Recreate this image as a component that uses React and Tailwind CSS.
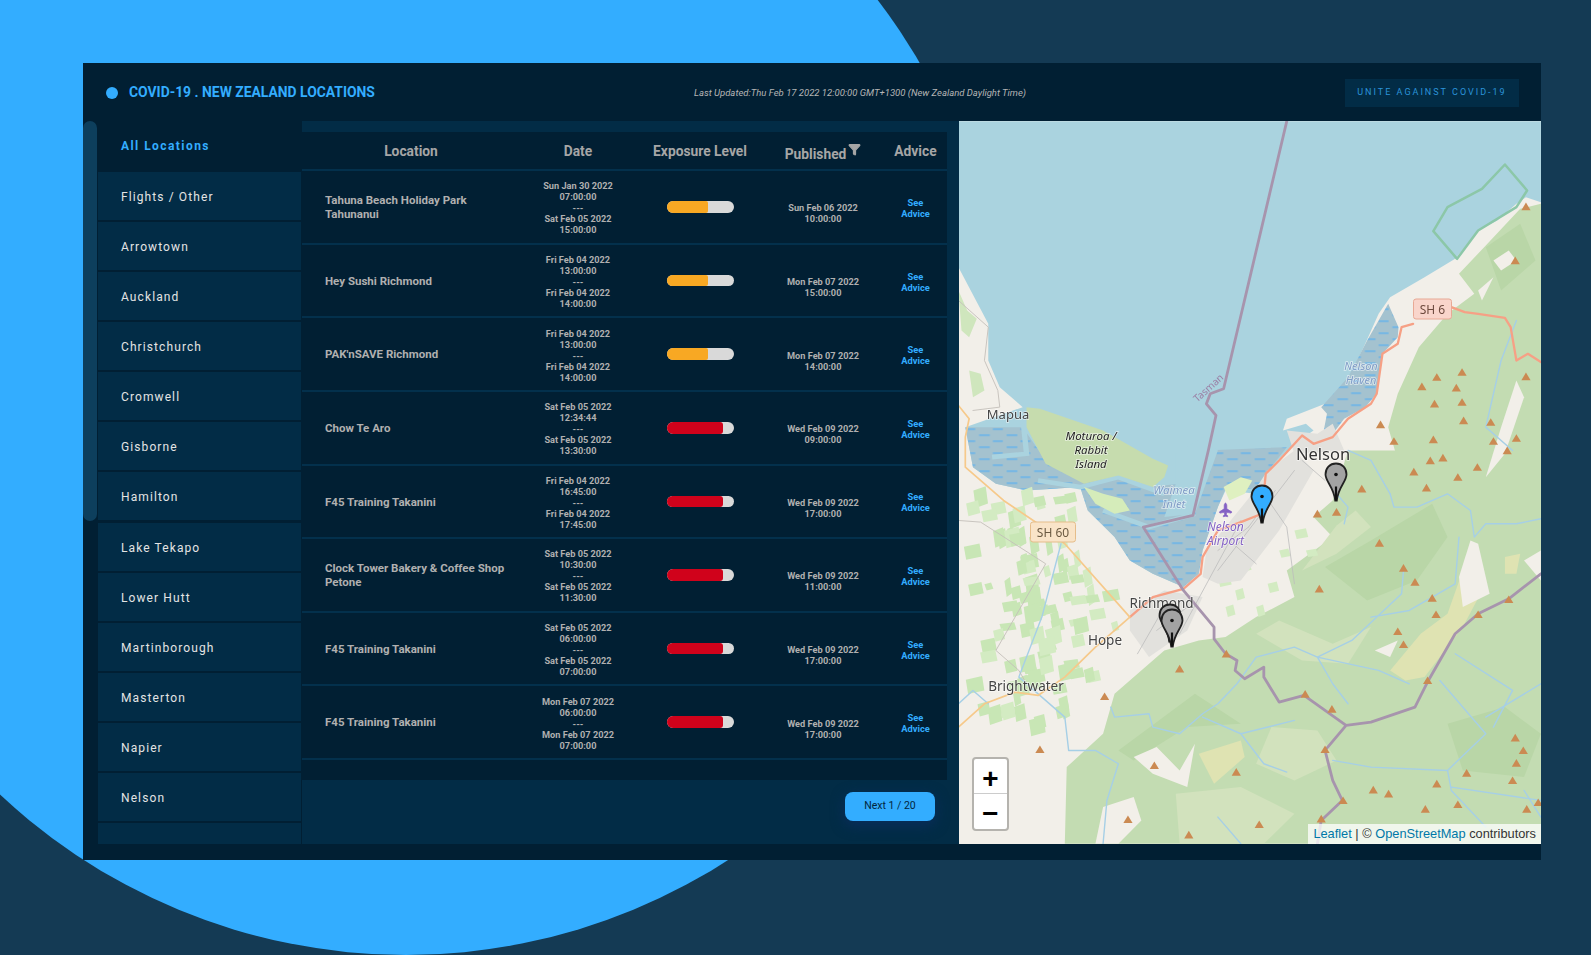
import { Filter, Plane } from 'lucide-react';

const locations = ['Flights / Other', 'Arrowtown', 'Auckland', 'Christchurch', 'Cromwell', 'Gisborne', 'Hamilton', 'Lake Tekapo', 'Lower Hutt', 'Martinborough', 'Masterton', 'Napier', 'Nelson', ''];

const rows = [
  { name: 'Tahuna Beach Holiday Park Tahunanui', from: ['Sun Jan 30 2022', '07:00:00'], to: ['Sat Feb 05 2022', '15:00:00'], level: 'orange', pub: ['Sun Feb 06 2022', '10:00:00'] },
  { name: 'Hey Sushi Richmond', from: ['Fri Feb 04 2022', '13:00:00'], to: ['Fri Feb 04 2022', '14:00:00'], level: 'orange', pub: ['Mon Feb 07 2022', '15:00:00'] },
  { name: "PAK'nSAVE Richmond", from: ['Fri Feb 04 2022', '13:00:00'], to: ['Fri Feb 04 2022', '14:00:00'], level: 'orange', pub: ['Mon Feb 07 2022', '14:00:00'] },
  { name: 'Chow Te Aro', from: ['Sat Feb 05 2022', '12:34:44'], to: ['Sat Feb 05 2022', '13:30:00'], level: 'red', pub: ['Wed Feb 09 2022', '09:00:00'] },
  { name: 'F45 Training Takanini', from: ['Fri Feb 04 2022', '16:45:00'], to: ['Fri Feb 04 2022', '17:45:00'], level: 'red', pub: ['Wed Feb 09 2022', '17:00:00'] },
  { name: 'Clock Tower Bakery & Coffee Shop Petone', from: ['Sat Feb 05 2022', '10:30:00'], to: ['Sat Feb 05 2022', '11:30:00'], level: 'red', pub: ['Wed Feb 09 2022', '11:00:00'] },
  { name: 'F45 Training Takanini', from: ['Sat Feb 05 2022', '06:00:00'], to: ['Sat Feb 05 2022', '07:00:00'], level: 'red', pub: ['Wed Feb 09 2022', '17:00:00'] },
  { name: 'F45 Training Takanini', from: ['Mon Feb 07 2022', '06:00:00'], to: ['Mon Feb 07 2022', '07:00:00'], level: 'red', pub: ['Wed Feb 09 2022', '17:00:00'] },
];

const gridCols = 'grid grid-cols-[218px_116px_128px_118px_65px]';

function ExposureBar({ level }) {
  return (
    <div className="w-[67px] h-[11.5px] rounded-full bg-[#d9d9d9] overflow-hidden">
      {level === 'orange'
        ? <div className="w-[41px] h-full rounded-r-[2px] bg-[#f8a823]" />
        : <div className="w-[56px] h-full rounded-r-[3px] bg-[#d0021b]" />}
    </div>
  );
}

function TableRow({ row }) {
  return (
    <div className={`${gridCols} h-[73.6px] items-center border-b-2 border-[#03304c]`}>
      <div className="pt-[2px] pl-[23px] pr-[10px] text-[11.5px] leading-[13.7px] font-bold text-[#b0b0b0]">{row.name}</div>
      <div className="pt-[2px] text-center text-[9.2px] leading-[11px] font-bold text-[#b0b0b0]">
        <div>{row.from[0]}</div>
        <div>{row.from[1]}</div>
        <div>---</div>
        <div>{row.to[0]}</div>
        <div>{row.to[1]}</div>
      </div>
      <div className="flex justify-center"><ExposureBar level={row.level} /></div>
      <div className="pt-[13px] text-center text-[9.2px] leading-[11px] font-bold text-[#b0b0b0]">
        <div>{row.pub[0]}</div>
        <div>{row.pub[1]}</div>
      </div>
      <div className="pt-[2px] pl-[2px] text-center text-[9.3px] leading-[11px] font-bold text-[#33adff]">
        <div>See</div>
        <div>Advice</div>
      </div>
    </div>
  );
}

// map geometry below is in crop coordinates, the group transform brings it to page space
const flatRect = (x, y, w, h) => `${x},${y} ${x + w},${y - h * 0.25} ${x + w + 6},${y + h * 0.75} ${x + 6},${y + h}`;

// scattered farmland west of the hills, stable pseudo random
const hash = (n) => {
  const v = Math.sin(n * 12.9898) * 43758.5453;
  return v - Math.floor(v);
};
const farms = [];
for (let i = 0; i < 150; i++) {
  const y = 120 + hash(i + 1) * 700;
  const limit = Math.min(300 + (y - 130) * 0.35, y > 620 ? 400 - (y - 620) * 0.7 : 480);
  const x = 28 + hash(i + 200) * 450;
  if (x > limit) continue;
  farms.push([x, y, 14 + hash(i + 400) * 30, 18 + hash(i + 600) * 36]);
}
const eastFarms = [[760, 340, 22, 24], [700, 380, 30, 30], [745, 420, 20, 30], [830, 400, 24, 28], [800, 470, 18, 30], [860, 300, 24, 22], [720, 470, 20, 30], [900, 240, 30, 26], [930, 300, 26, 20]];

const peaks = [
  [1255, 30], [1288, 22], [1378, 50], [1212, 64], [1327, 80], [1245, 112], [1076, 115], [1010, 185], [960, 190], [1122, 278],
  [1185, 353], [1215, 395], [965, 415], [1260, 443], [1270, 492], [1170, 543], [1185, 582], [1460, 447], [1380, 492], [722, 610],
  [600, 655], [1248, 690], [928, 731], [404, 738], [998, 776], [980, 897], [235, 897], [534, 945], [748, 965], [1477, 862],
  [1498, 900], [1480, 938], [1350, 968], [1470, 990], [1272, 1000], [1106, 1018], [1146, 1030], [1027, 1050], [1242, 1076], [1327, 1062],
  [1507, 1076], [1537, 1056], [465, 1107], [970, 1105], [808, 1122], [624, 1153],
  // northern ones, from the upper crop
  [1505, -732], [1477, -570], [1272, -220], [1338, -235], [1233, -192], [1323, -188], [1266, -140], [1338, -145], [1125, -78], [1342, -90],
  [1413, -85], [1160, -28], [1263, -33], [1420, -28], [1480, -37], [1456, 0], [1505, -222],
];

function Marker({ x, tip, fill }) {
  return (
    <g transform={`translate(${x - 12} ${tip - 38})`}>
      <path d="M12 1C5.7 1 1.500 5.600 1.500 12c0 7 8.300 12.500 9.700 26h1.600c1.400-13.500 9.700-19 9.700-26C22.500 5.600 18.300 1 12 1Z" fill={fill} stroke="#222" strokeWidth="1.800" />
      <path d="M12 24v14" stroke="#111" strokeWidth="2.200" />
      <circle cx="12" cy="12" r="1.800" fill="#111" />
    </g>
  );
}

function MapLabel({ x, y, size, fill = '#444', italic, children }) {
  return (
    <text x={x} y={y} fontSize={size} fill={fill} fontStyle={italic ? 'italic' : 'normal'} textAnchor="middle" dominantBaseline="central" fontFamily="'Noto Sans', 'Open Sans', sans-serif" stroke="#ffffff" strokeOpacity="0.6" strokeWidth="1.600" paintOrder="stroke">
      {children}
    </text>
  );
}

function MapDrawing() {
  const thin = { vectorEffect: 'non-scaling-stroke', fill: 'none', strokeLinejoin: 'round', strokeLinecap: 'round' };
  return (
    <svg className="block w-[582px] h-[723px] blur-[0.4px]" viewBox="959 120.5 582 723">
      <defs>
        <pattern id="flats" patternUnits="userSpaceOnUse" width="72" height="36">
          <rect width="72" height="36" fill="#a4c2cf" />
          <rect x="4" y="6" width="28" height="4" fill="#5fb2ee" />
          <rect x="40" y="24" width="26" height="4" fill="#5fb2ee" />
        </pattern>
      </defs>
      <rect x="958" y="120" width="584" height="724" fill="#f2efe9" />
      <g transform="translate(950 60) scale(0.3827 0.3333)">
        {/* sea */}
        <path fill="#aad3df" d="M22 182H1544V425L1505 410 1480 430 1430 480 1380 510 1345 560 1320 595 1240 650 1150 710 1120 760 1085 850 1040 960 980 1030 880 1075 870 1110 930 1090 950 1110 900 1150 860 1200 L880 1170 825 1240 800 1300 720 1290 700 1340 660 1470 650 1540 610 1580 530 1540 470 1500 430 1430 360 1350 340 1280 200 1290 120 1270 60 1220 40 1100 190 1040 130 980 100 900 100 790 22 620Z" />
        {/* tidal flats */}
        <path fill="url(#flats)" d="M1145 730 1172 800 1170 830 1130 880 1115 1000 1085 1040 1030 1075 1000 1120 975 1120 985 1060 970 1040 1040 950 1090 840Z" />
        <path fill="url(#flats)" d="M660 1170 880 1160 825 1240 800 1285 720 1285 700 1340 660 1470 650 1540 610 1580 530 1540 470 1500 430 1430 360 1350 340 1280 200 1290 120 1270 60 1220 40 1100 190 1100 250 1200 350 1200 430 1230 520 1280 600 1270 640 1230Z" />
        <path fill="#aad3df" d="M590 1180 660 1130 700 1170 640 1360 560 1370 590 1270Z" />
        <path fill="none" stroke="#aad3df" strokeWidth="14" d="M190 1070 200 1180 110 1190M230 1260 340 1280 440 1250 560 1300M400 1350 520 1400 640 1360" />
        {/* rabbit island */}
        <path fill="#c6dcae" d="M200 1040 235 1045 400 1110 530 1195 570 1215 560 1250 530 1280 440 1245 350 1270 250 1210 200 1100Z" />
        <path fill="#d5ecba" d="M350 1280 400 1300 450 1315 470 1350 430 1360 380 1330Z" />
        <path fill="#dff0c0" d="M715 1280 760 1250 790 1260 770 1300 730 1320Z" />

        {/* forest */}
        <path fill="#c3dcb2" d="M1490 445 1544 430V1180H1165L1145 1100 1170 1000 1225 860 1300 760 1370 700 1330 640 1400 555Z" />
        <path fill="#c3dcb2" d="M1040 1170H1544V2350H300L305 2120 400 2020 430 1900 560 1770 650 1740 720 1730 800 1670 900 1610 880 1530 1000 1430 950 1370 1000 1320Z" />
        <path fill="#b9d6a7" d="M1090 1620 1220 1560 1300 1430 1260 1330 1100 1440 980 1520Z" />
        <path fill="#b9d6a7" d="M1300 1990 1450 1940 1544 2020 1500 2150 1340 2130Z" />
        <path fill="#b9d6a7" d="M440 2070 640 1900 760 1990 620 2000 480 2100Z" />
        <path fill="#b9d6a7" d="M1400 560 1490 490 1530 600 1440 690Z" />
        <path fill="#d2e2bd" d="M1010 1395 1060 1350 1100 1400 1010 1480 920 1530Z" />
        <path fill="#d2e2bd" d="M800 1720 860 1680 1000 1750 1100 1700 1040 1810 920 1800Z" />
        <path fill="#d2e2bd" d="M590 2200 760 2180 900 2260 820 2350H600Z" />
        <path fill="#d2e2bd" d="M840 2000 960 2010 1010 2100 900 2160 800 2110Z" />
        <path fill="#dfe3b2" d="M1150 1830 1230 1720 1300 1660 1340 1530 1400 1570 1340 1700 1240 1850 1190 1860Z" />
        <path fill="#dfe3b2" d="M650 2080 760 2040 770 2090 690 2170Z" />
        <path fill="#dfe3b2" d="M1450 1490 1490 1480 1480 1540 1450 1540Z" />
        <path fill="#f2efe9" d="M1340 1640 1410 1600 1380 1450 1360 1440 1330 1550Z" />
        <path fill="#f2efe9" d="M1110 1770 1170 1740 1150 1790Z" />
        <path fill="#f2efe9" d="M480 2090 540 2060 600 2130 640 2050 620 2180 530 2140Z" />
        <path fill="#f2efe9" d="M1400 1250 1440 1100 1480 960 1500 1010 1450 1180Z" />
        <path fill="#f2efe9" d="M1380 690 1420 650 1390 720Z" />
        <path fill="#f2efe9" d="M1420 600 1460 570 1480 600 1440 630Z" />
        <path fill="#f2efe9" d="M1500 1500 1544 1470 1544 1560Z" />
        <path fill="#f2efe9" d="M400 2240 480 2210 500 2280 440 2350 380 2350Z" />

        {/* farmland */}
        <g transform="translate(0 1170)">
          {farms.map((f, i) => <polygon key={i} points={flatRect(...f)} fill={i % 3 === 1 ? '#d3ebc2' : '#c8e6b5'} />)}
          {eastFarms.map((f, i) => <polygon key={i} points={flatRect(...f)} fill="#d3ebc2" />)}
        </g>
        <path fill="#cfe6bd" d="M22 690 45 750 70 775 50 830 30 810Z M50 930 80 940 90 990 60 1010Z" />

        {/* towns */}
        <path fill="#e2e1dd" d="M900 1170 950 1230 860 1410 760 1560 700 1570 660 1550 670 1470 790 1300 830 1230Z" />
        <path fill="#e2e1dd" d="M470 1650 560 1590 660 1610 620 1710 520 1790 470 1710Z" />
        <path fill="#e2e1dd" d="M880 1110 960 1120 1000 1090 1030 1170 900 1180Z" />
        <path {...thin} stroke="#bdbdbd" strokeWidth="0.800" d="M900 1230 700 1530M820 1300 880 1400 900 1570M760 1380 600 1720M560 1640 490 1780M850 1290 780 1400M780 1400 700 1470M720 1430 800 1510M620 1640 540 1710M920 1200 980 1260" />

        {/* rivers */}
        <g transform="translate(0 1170)">
          <path {...thin} stroke="#a6cfe6" strokeWidth="1.400" d="M22 760 60 720 100 760M290 280 240 500 180 680 300 800 310 900 380 900 440 940 410 1050 400 1180M420 770 430 800 520 790 530 830 600 850 660 790 700 760 750 700 800 620 900 590 960 620 1120 660 1200 700M1150 130 1160 170 1220 170 1300 130 1360 180 1370 260 1400 220 1480 220 1544 205M660 800 760 850 820 940 880 965M760 850 900 810M960 620 1050 570 1180 430 1185 360M1000 930 1100 950 1300 960 1400 850 1280 690M1300 960 1310 1020 1400 1130M1310 1010 1544 1050M1320 610 1470 720 1420 830M1010 130 1040 170 1030 220M960 620 1000 700 1040 760M1400 800 1544 700M1500 1020 1544 1100M1330 260 1320 400 1200 480 1100 500M700 1100 760 1180" />
          <path {...thin} stroke="#a6cfe6" strokeWidth="1.400" d="M1040 0 1100 30 1150 130M1480 -390 1440 -270 1400 -70 1470 0" />
        </g>

        {/* roads */}
        <path {...thin} stroke="#f6a085" strokeWidth="2.300" d="M1544 905 1510 880 1480 900 1465 800 1450 772 1380 760 1345 755 1310 740M1210 790 1180 800 1170 850 1130 880 1115 1000 1100 1030 1040 1075 1000 1130 950 1150 920 1125 860 1200 825 1240 815 1360 760 1385 700 1410 660 1490 655 1540 610 1585 530 1610 470 1670" />
        <path {...thin} stroke="#f6c98a" strokeWidth="1.700" d="M22 1035 50 1075 40 1130 40 1220 140 1320 230 1390 300 1450 470 1670 380 1760 300 1850 230 1905 170 1895 90 1930 22 2000" />
        <path {...thin} stroke="#c4c0ba" strokeWidth="0.900" d="M22 720 100 800 90 900 125 990 130 1040 60 1050M22 1380 80 1385 250 1510 120 1770 180 1830 200 1870" />

        {/* boundaries */}
        <path {...thin} stroke="#a794ad" strokeWidth="2.800" d="M880 182 715 985 680 1000 670 1030 695 1065 675 1170 635 1365 505 1400 610 1590 690 1700 690 1735 720 1780 750 1800 745 1830 770 1855 820 1820 820 1850 860 1925 925 1905 1035 1995 1100 1985 1215 1940 1250 1860 1320 1720 1380 1660 1460 1615 1544 1540M1035 1995 980 2070 1000 2160 1025 2220 970 2280 960 2350" />
        <path {...thin} stroke="#8cc7a8" strokeWidth="2.500" d="M1450 312 1508 390 1480 440 1380 510 1325 595 1263 512 1300 440 1390 385Z" />

        {/* peaks */}
        <g transform="translate(0 1170)">
          {peaks.map(([x, y], i) => <polygon key={i} points={`${x},${y - 12} ${x + 12},${y + 11} ${x - 12},${y + 11}`} fill="#cb8a52" />)}
        </g>
      </g>

      <MapLabel x={1008} y={413} size={13}>Mapua</MapLabel>
      <MapLabel x={1091} y={435} size={11.5} fill="#222" italic>Moturoa /</MapLabel>
      <MapLabel x={1091} y={449} size={11.5} fill="#222" italic>Rabbit</MapLabel>
      <MapLabel x={1091} y={463} size={11.5} fill="#222" italic>Island</MapLabel>
      <MapLabel x={1361} y={365} size={11} fill="#7f9cc6" italic>Nelson</MapLabel>
      <MapLabel x={1361} y={379} size={11} fill="#7f9cc6" italic>Haven</MapLabel>
      <MapLabel x={1174} y={489} size={11.5} fill="#7f9cc6" italic>Waimea</MapLabel>
      <MapLabel x={1174} y={503} size={11.5} fill="#7f9cc6" italic>Inlet</MapLabel>
      <MapLabel x={1225.5} y={526} size={12} fill="#8461c4" italic>Nelson</MapLabel>
      <MapLabel x={1225.5} y={540} size={12} fill="#8461c4" italic>Airport</MapLabel>
      <MapLabel x={1323} y={453} size={16.5} fill="#333">Nelson</MapLabel>
      <MapLabel x={1161.6} y={602.7} size={13.5}>Richmond</MapLabel>
      <MapLabel x={1105} y={639} size={13.5}>Hope</MapLabel>
      <MapLabel x={1026} y={685} size={13.5}>Brightwater</MapLabel>
      <text x={1208} y={387} transform="rotate(-42 1208 387)" fontSize="10" fill="#9b7fa5" textAnchor="middle" dominantBaseline="central" fontFamily="'Noto Sans', sans-serif">Tasman</text>

      <g transform="translate(1218 503)">
        <Plane x="0" y="0" width="15" height="15" fill="#8461c4" stroke="#8461c4" strokeWidth="1" transform="rotate(-45 7.500 7.500)" />
      </g>

      <rect x="1413.5" y="298.5" width="38" height="20" rx="2.5" fill="#f9d5cb" stroke="#e8a995" />
      <text x="1432.5" y="308.5" fontSize="12" fill="#6e4a3e" textAnchor="middle" dominantBaseline="central" fontFamily="'Noto Sans', sans-serif">SH 6</text>
      <rect x="1030.5" y="521.5" width="45" height="20" rx="2.5" fill="#f9e4c8" stroke="#e5bd8a" />
      <text x="1053" y="531.5" fontSize="12" fill="#6b5a42" textAnchor="middle" dominantBaseline="central" fontFamily="'Noto Sans', sans-serif">SH 60</text>

      <Marker x={1170} tip={641} fill="#a3a3a3" />
      <Marker x={1172} tip={646} fill="#a3a3a3" />
      <Marker x={1336} tip={500} fill="#a3a3a3" />
      <Marker x={1262} tip={522} fill="#33adff" />
    </svg>
  );
}

export default function App() {
  return (
    <div className="relative w-[1591px] h-[955px] overflow-hidden bg-[#143a54] pt-[63px] pl-[83px] font-['Roboto',sans-serif]">
      {/* big blue circle behind the panel */}
      <div className="absolute left-[-188px] top-[-233px] w-[1188px] h-[1188px] rounded-full bg-[#33adff]" />

      <div className="relative w-[1458px] h-[797px] bg-[#011f33] flex flex-col">
        <header className="h-[57.5px] shrink-0 flex items-center justify-between pt-[2px] pl-[23px] pr-[22px]">
          <div className="flex items-center gap-[11px]">
            <span className="w-[12px] h-[12px] rounded-full bg-[#33adff]" />
            <h1 className="text-[13.9px] font-bold text-[#33adff]">COVID-19 . NEW ZEALAND LOCATIONS</h1>
          </div>
          <p className="text-[9.5px] italic text-[#b5b5b5]">Last Updated:Thu Feb 17 2022 12:00:00 GMT+1300 (New Zealand Daylight Time)</p>
          <div className="w-[174px] h-[28px] flex items-center justify-center bg-[#022c46] text-[9px] tracking-[2px] text-[#2b93d9]">UNITE AGAINST COVID-19</div>
        </header>

        <div className="flex h-[723px] overflow-hidden">
          {/* scrollbar + location list */}
          <div className="w-[15px] shrink-0">
            <div className="w-[14px] h-[400px] rounded-[7px] bg-[#0d3f5d]" />
          </div>
          <aside className="w-[204px] shrink-0 flex flex-col gap-[2.15px] overflow-hidden">
            <div className="h-[49px] shrink-0 flex items-center pt-[2px] pl-[23px] text-[12px] font-bold tracking-[1.44px] text-[#33adff]">All Locations</div>
            {locations.map((loc, i) => (
              <div key={i} className="w-[203px] h-[48px] shrink-0 flex items-center pt-[2px] pl-[23px] bg-[#022c46] text-[12px] tracking-[1.1px] text-[#e4e4e4]">{loc}</div>
            ))}
          </aside>

          {/* table */}
          <div className="w-[657px] shrink-0 flex flex-col bg-[#022c46]">
            <div className="h-[11.5px] shrink-0" />
            <div className="w-[645px] h-[648px] shrink-0 bg-[#011f33]">
              <div className={`${gridCols} h-[39.2px] items-center border-b-2 border-[#03304c] text-[13.8px] font-bold text-[#a6a6a6] text-center`}>
                <div className="pt-[2px]">Location</div>
                <div className="pt-[2px]">Date</div>
                <div className="pt-[2px]">Exposure Level</div>
                <div className="flex items-center justify-center gap-[2px]">
                  <span className="pt-[8px]">Published</span>
                  <Filter size={13} fill="#a6a6a6" className="mb-[3px]" />
                </div>
                <div className="pt-[2px] pl-[2px]">Advice</div>
              </div>
              {rows.map((r, i) => <TableRow key={i} row={r} />)}
            </div>
            <div className="flex-1 flex justify-end items-start pt-[11.5px] pr-[24px]">
              <button className="w-[90px] h-[29px] rounded-[8px] bg-[#33adff] text-[10.5px] text-[#02263e] shadow-[0_4px_14px_#0a2d5e]">Next 1 / 20</button>
            </div>
          </div>

          {/* map */}
          <div className="relative w-[582px] shrink-0 overflow-hidden bg-[#f2efe9]">
            <MapDrawing />
            <div className="absolute left-[13px] bottom-[13px] w-[37px] rounded-[4px] border-2 border-[#b5b3ae] bg-white">
              <div className="h-[35px] pt-[10px] flex items-center justify-center border-b border-[#ccc] font-['Liberation_Mono',monospace] font-bold text-[28px] leading-none text-black">+</div>
              <div className="h-[35px] pt-[10px] flex items-center justify-center font-['Liberation_Mono',monospace] font-bold text-[28px] leading-none text-black">−</div>
            </div>
            <div className="absolute right-0 bottom-0 h-[20px] pl-[5px] pr-[5px] flex items-center bg-white/75 font-['Liberation_Sans',sans-serif] text-[12.8px] text-[#333]">
              <span className="text-[#0078a8]">Leaflet</span>&nbsp;|&nbsp;©&nbsp;<span className="text-[#0078a8]">OpenStreetMap</span>&nbsp;contributors
            </div>
          </div>
        </div>
      </div>
    </div>
  );
}
